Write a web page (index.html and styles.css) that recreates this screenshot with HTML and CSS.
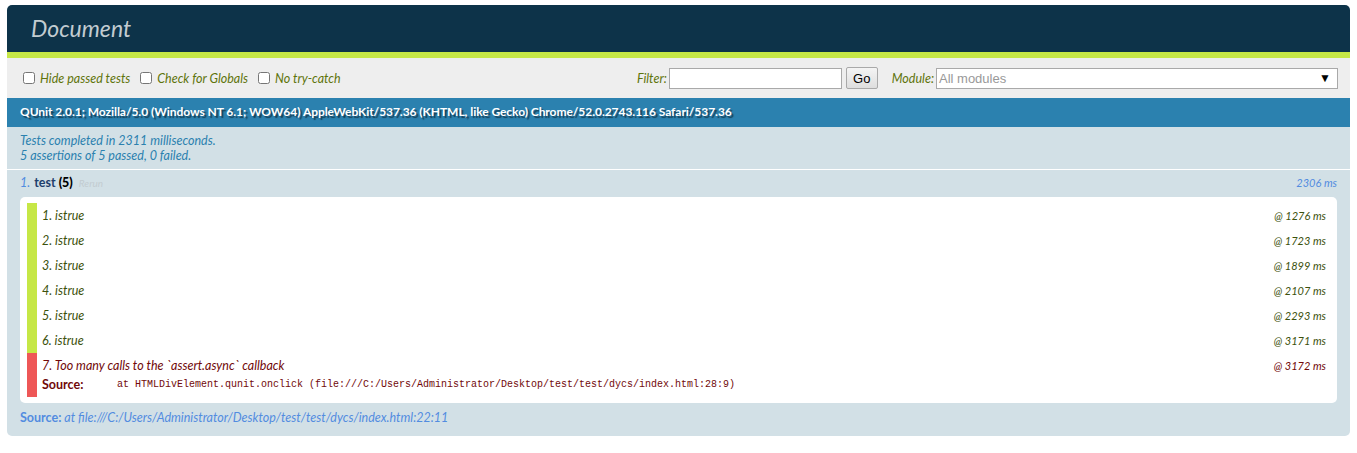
FILE: index.html
```html
<!DOCTYPE html>
<html>
<head>
<meta charset="utf-8">
<title>Document</title>
<link rel="stylesheet" href="styles.css">
</head>
<body>
<div class="qunit">
  <h1 class="q-header"><a href="#">Document</a></h1>
  <div class="q-banner"></div>
  <div class="q-toolbar">
    <label class="q-check"><input type="checkbox"><span>Hide passed tests</span></label>
    <label class="q-check"><input type="checkbox"><span>Check for Globals</span></label>
    <label class="q-check"><input type="checkbox"><span>No try-catch</span></label>
    <div class="q-spacer"></div>
    <label class="q-label">Filter:</label>
    <div class="q-input"></div>
    <button class="q-go">Go</button>
    <label class="q-label q-modlabel">Module:</label>
    <div class="q-select"><span class="q-sel-text">All modules</span><span class="q-sel-arrow">▼</span></div>
  </div>
  <div class="q-useragent">QUnit 2.0.1; Mozilla/5.0 (Windows NT 6.1; WOW64) AppleWebKit/537.36 (KHTML, like Gecko) Chrome/52.0.2743.116 Safari/537.36</div>
  <div class="q-result">
    <div>Tests completed in 2311 milliseconds.</div>
    <div>5 assertions of 5 passed, 0 failed.</div>
  </div>
  <ol class="q-tests">
    <li class="q-test">
      <div class="q-test-head">
        <span class="q-num">1.</span>
        <strong class="q-testname-wrap"><span class="q-testname">test</span> <b class="q-counts">(5)</b></strong>
        <a class="q-rerun" href="#">Rerun</a>
        <span class="q-test-runtime">2306 ms</span>
      </div>
      <ol class="q-asserts">
        <li class="q-assert pass"><span class="q-atext">1. istrue</span><span class="q-runtime">@ 1276 ms</span></li>
        <li class="q-assert pass"><span class="q-atext">2. istrue</span><span class="q-runtime">@ 1723 ms</span></li>
        <li class="q-assert pass"><span class="q-atext">3. istrue</span><span class="q-runtime">@ 1899 ms</span></li>
        <li class="q-assert pass"><span class="q-atext">4. istrue</span><span class="q-runtime">@ 2107 ms</span></li>
        <li class="q-assert pass"><span class="q-atext">5. istrue</span><span class="q-runtime">@ 2293 ms</span></li>
        <li class="q-assert pass"><span class="q-atext">6. istrue</span><span class="q-runtime">@ 3171 ms</span></li>
        <li class="q-assert fail">
          <div class="q-fail-head"><span class="q-atext">7. Too many calls to the `assert.async` callback</span><span class="q-runtime">@ 3172 ms</span></div>
          <div class="q-source-row"><span class="q-th">Source:</span><pre class="q-pre">    at HTMLDivElement.qunit.onclick (file:///C:/Users/Administrator/Desktop/test/test/dycs/index.html:28:9)</pre></div>
        </li>
      </ol>
      <div class="q-test-source"><span class="q-th2">Source:</span><span class="q-td2">at file:///C:/Users/Administrator/Desktop/test/test/dycs/index.html:22:11</span></div>
    </li>
  </ol>
</div>
</body>
</html>
```
FILE: styles.css
```css
html, body {
  margin: 0;
  padding: 0;
  background: #fff;
}
body {
  padding: 5px 7px 0 7px;
  font-family: "Lato", "Open Sans", sans-serif;
}
.qunit {
  display: flex;
  flex-direction: column;
}
.q-header {
  margin: 0;
  padding: 12px 0 12px 24px;
  background-color: #0D3349;
  color: #8699A4;
  font-size: 23px;
  line-height: 23px;
  font-weight: 400;
  font-style: italic;
  border-radius: 5px 5px 0 0;
}
.q-header a {
  color: #C2CCD1;
  text-decoration: none;
}
.q-banner {
  height: 6px;
  background-color: #C6E746;
}
.q-toolbar {
  display: flex;
  align-items: center;
  height: 40px;
  box-sizing: border-box;
  padding: 0 12px 0 14px;
  background-color: #EEE;
  color: #5E740B;
  font-size: 12.5px;
  font-style: italic;
}
.q-check {
  display: flex;
  align-items: center;
  margin-right: 8px;
}
.q-check input {
  width: 12px;
  height: 12px;
  margin: 0 5px 0 2px;
}
.q-spacer {
  flex: 1;
}
.q-label {
  margin-right: 2px;
}
.q-modlabel {
  margin-left: 14px;
}
.q-input {
  width: 171px;
  height: 19px;
  border: 1px solid #a9a9a9;
  background: #fff;
}
.q-go {
  margin-left: 4px;
  height: 22px;
  width: 32px;
  padding: 0;
  border: 1px solid #a9a9a9;
  border-radius: 2px;
  background: linear-gradient(#f4f4f4, #dedede);
  font-family: "Liberation Sans", Arial, sans-serif;
  font-size: 13px;
  font-style: normal;
  color: #000;
}
.q-select {
  display: flex;
  align-items: center;
  justify-content: space-between;
  width: 392px;
  height: 19px;
  padding: 0 6px 0 2px;
  border: 1px solid #a9a9a9;
  background: #fff;
  font-family: "Liberation Sans", Arial, sans-serif;
  font-style: normal;
  font-size: 13px;
  color: #999;
}
.q-sel-arrow {
  color: #000;
  font-size: 12px;
}
.q-useragent {
  padding: 6px 13px 7px 13px;
  line-height: 16px;
  background-color: #2B81AF;
  color: #fff;
  font-size: 12px;
  font-weight: 700;
  letter-spacing: -0.05px;
  text-shadow: rgba(0, 0, 0, 0.5) 2px 2px 1px;
}
.q-result {
  padding: 6px 13px 6px 13px;
  line-height: 15px;
  background-color: #D2E0E6;
  color: #2B81AF;
  font-size: 12.5px;
  font-style: italic;
  border-bottom: 1px solid #fff;
}
.q-tests {
  list-style: none;
  margin: 0;
  padding: 0;
}
.q-test {
  padding: 5px 13px 10px 13px;
  background-color: #D2E0E6;
  color: #528CE0;
  font-size: 12.5px;
  line-height: 15px;
  border-radius: 0 0 5px 5px;
}
.q-test-head {
  display: flex;
  align-items: baseline;
}
.q-num {
  font-style: italic;
  margin-right: 4px;
}
.q-testname-wrap {
  font-weight: 700;
  color: #366097;
}
.q-testname {
  color: #1f3f6c;
}
.q-counts {
  color: #000;
}
.q-rerun {
  margin-left: 6px;
  color: #C2CCD1;
  font-size: 10px;
  font-style: italic;
  text-decoration: none;
}
.q-test-runtime {
  margin-left: auto;
  font-size: 11px;
  font-style: italic;
}
.q-asserts {
  list-style: none;
  margin: 6px 0 0 0;
  padding: 6px 6px 6px 7px;
  background-color: #fff;
  border-radius: 5px;
}
.q-assert {
  padding: 5px 5px 5px 5px;
  font-style: italic;
}
.q-assert.pass {
  display: flex;
  justify-content: space-between;
  color: #3C510C;
  border-left: 10px solid #C6E746;
}
.q-assert.fail {
  color: #710909;
  border-left: 10px solid #EE5757;
}
.q-fail-head {
  display: flex;
  justify-content: space-between;
}
.q-runtime {
  font-size: 11px;
  padding-right: 0;
}
.q-source-row {
  display: flex;
  margin-top: 4px;
  line-height: 15px;
}
.q-th {
  flex: none;
  font-weight: 700;
  font-style: normal;
  width: 51px;
}
.q-pre {
  margin: 0;
  font-family: "Liberation Mono", monospace;
  font-size: 10px;
  font-style: normal;
  color: #710909;
}
.q-test-source {
  margin-top: 7px;
  line-height: 16px;
}
.q-th2 {
  font-weight: 700;
  margin-right: 3px;
}
.q-td2 {
  font-style: italic;
}
```
